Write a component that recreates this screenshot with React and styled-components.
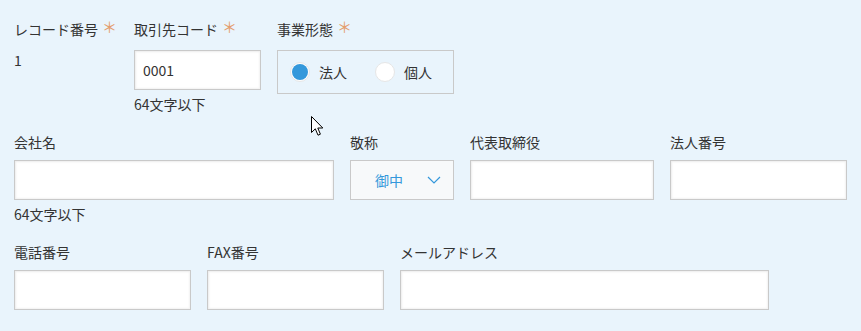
import React from "react"
import styled, { createGlobalStyle } from "styled-components"

const GlobalStyle = createGlobalStyle`
  html, body {
    margin: 0;
    padding: 0;
    background: #e9f4fc;
  }
  body {
    font-family: "Noto Sans CJK JP", "Noto Sans", sans-serif;
    font-size: 14px;
    color: #333333;
  }
`;

const Page = styled.div`
  position: relative;
  width: 861px;
  height: 331px;
  padding: 19px 0 0 14px;
  box-sizing: border-box;
  overflow: hidden;
`;

const Row = styled.div`
  display: flex;
  align-items: flex-start;
  gap: 16px;
  margin-bottom: 18px;
`;

const Field = styled.div`
  display: flex;
  flex-direction: column;
  width: ${p => p.$w}px;
`;

const Label = styled.div`
  display: flex;
  align-items: center;
  line-height: 20px;
  height: 20px;
  margin-bottom: ${p => (p.$required ? 11 : 8)}px;
  white-space: nowrap;
`;

const Star = styled.span`
  color: #e49d6d;
  margin-left: 4px;
  font-size: 15px;
  line-height: 20px;
  position: relative;
  top: -2px;
`;

const Value = styled.div`
  line-height: 20px;
  height: 40px;
`;

const Input = styled.div`
  height: 40px;
  box-sizing: border-box;
  border: 1px solid #c9c9c9;
  background: #ffffff;
  box-shadow: inset 1px 1px 2px #ededed, inset -1px -1px 2px #f3f3f3;
  padding: 0 8px;
  display: flex;
  align-items: center;
  font-size: 14px;
`;

const Hint = styled.div`
  margin-top: 4px;
  line-height: 20px;
  white-space: nowrap;
`;

const RadioBox = styled.div`
  height: 44px;
  box-sizing: border-box;
  border: 1px solid #c9c9c9;
  padding: 0 21px 1px 12px;
  display: inline-flex;
  align-items: center;
  gap: 28px;
  align-self: flex-start;
`;

const RadioItem = styled.label`
  display: flex;
  align-items: center;
  gap: 9px;
`;

const Circle = styled.span`
  width: 20px;
  height: 20px;
  box-sizing: border-box;
  border-radius: 50%;
  background: #ffffff;
  border: 1px solid #e6e6e6;
  display: flex;
  align-items: center;
  justify-content: center;
  &::after {
    content: "";
    width: 16px;
    height: 16px;
    border-radius: 50%;
    background: ${p => (p.$on ? "#3498db" : "transparent")};
  }
`;

const Select = styled.div`
  height: 40px;
  box-sizing: border-box;
  border: 1px solid #c9c9c9;
  background: #f7f9fa;
  color: #3498db;
  display: flex;
  align-items: center;
  justify-content: space-between;
  padding: 0 12px 0 24px;
`;

const Cursor = styled.svg`
  position: absolute;
  left: 311px;
  top: 116px;
`;

const Chevron = () => (
  <svg width="14" height="8" viewBox="0 0 14 8">
    <path d="M1 1 L7 7 L13 1" fill="none" stroke="#3498db" strokeWidth="1.2" />
  </svg>
);

export default function App() {
  return (
    <>
      <GlobalStyle />
      <Page>
        <Row>
          <Field $w={104}>
            <Label $required>レコード番号<Star>＊</Star></Label>
            <Value>1</Value>
          </Field>
          <Field $w={127}>
            <Label $required>取引先コード<Star>＊</Star></Label>
            <Input>0001</Input>
            <Hint>64文字以下</Hint>
          </Field>
          <Field $w={178}>
            <Label $required>事業形態<Star>＊</Star></Label>
            <RadioBox>
              <RadioItem><Circle $on />法人</RadioItem>
              <RadioItem><Circle />個人</RadioItem>
            </RadioBox>
          </Field>
        </Row>
        <Row>
          <Field $w={320}>
            <Label>会社名</Label>
            <Input />
            <Hint>64文字以下</Hint>
          </Field>
          <Field $w={104}>
            <Label>敬称</Label>
            <Select>御中<Chevron /></Select>
          </Field>
          <Field $w={184}>
            <Label>代表取締役</Label>
            <Input />
          </Field>
          <Field $w={177}>
            <Label>法人番号</Label>
            <Input />
          </Field>
        </Row>
        <Row>
          <Field $w={177}>
            <Label>電話番号</Label>
            <Input />
          </Field>
          <Field $w={177}>
            <Label>FAX番号</Label>
            <Input />
          </Field>
          <Field $w={369}>
            <Label>メールアドレス</Label>
            <Input />
          </Field>
        </Row>
        <Cursor width="13" height="21" viewBox="0 0 13 21">
          <path d="M0.5 0.5 L0.5 16.5 L4.3 12.8 L7 19.2 L9.4 18.2 L6.8 12 L11.8 12 Z" fill="#ffffff" stroke="#000000" strokeWidth="1" strokeLinejoin="miter" />
        </Cursor>
      </Page>
    </>
  );
}
